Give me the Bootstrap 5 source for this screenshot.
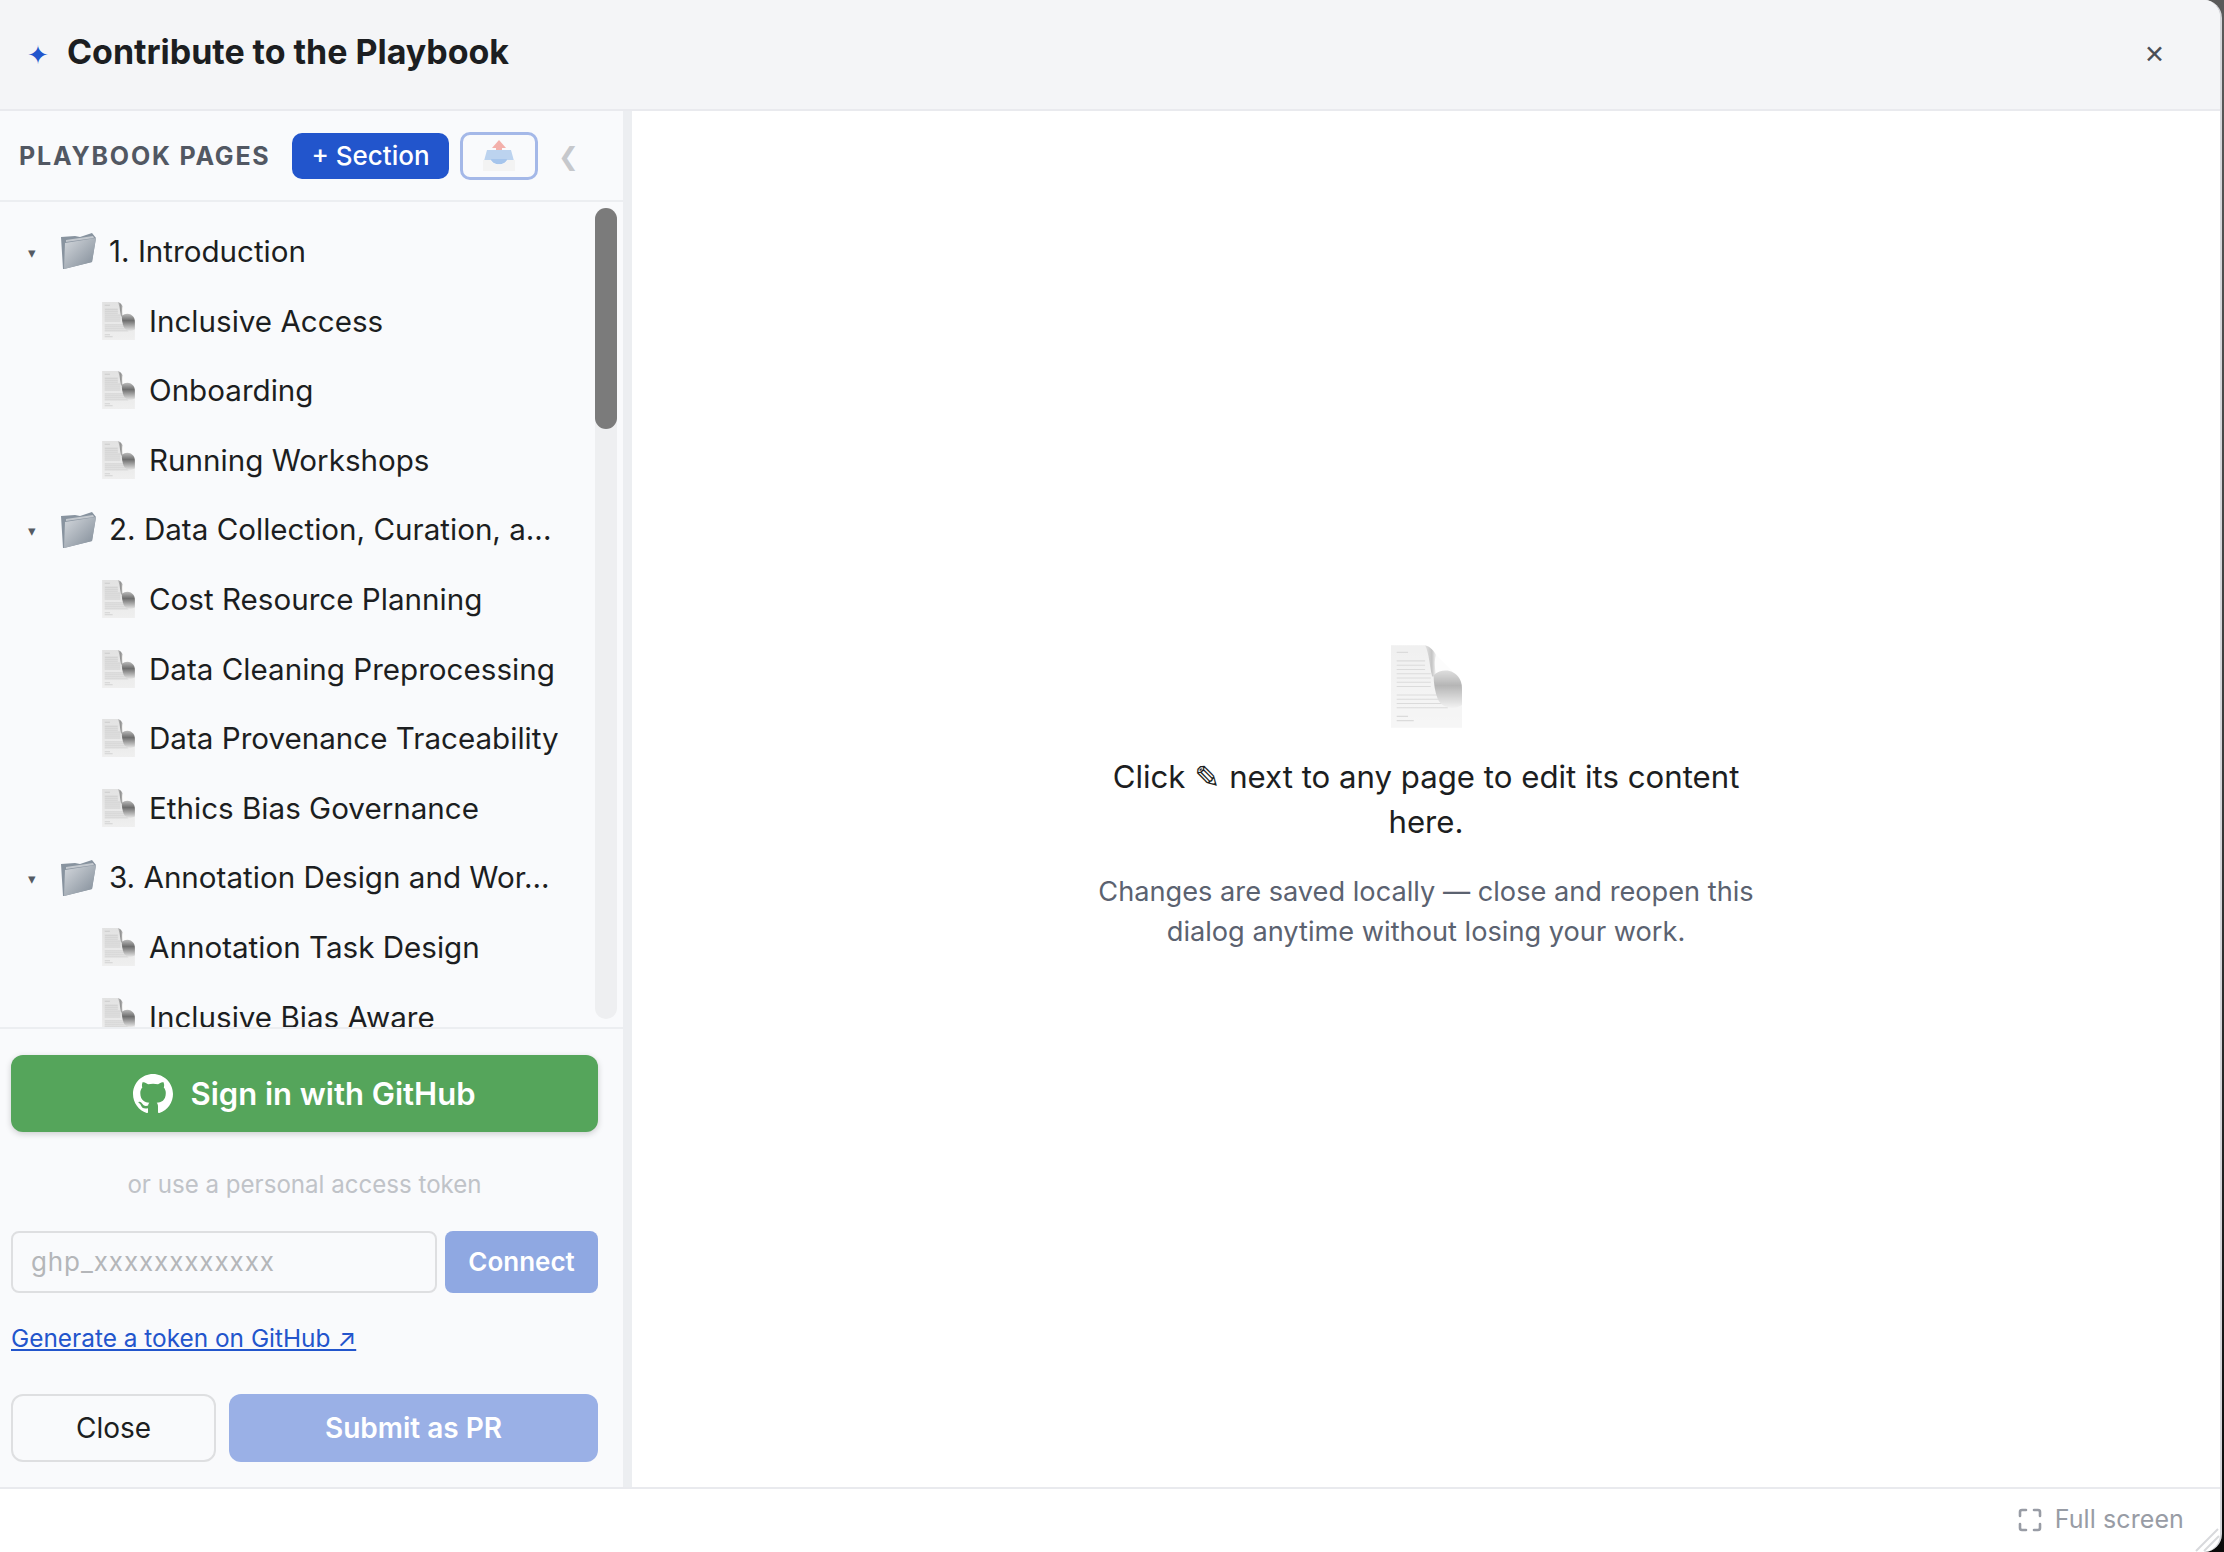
<!DOCTYPE html>
<html lang="en">
<head>
  <meta charset="UTF-8">
  <title>Contribute to the Playbook</title>
  <link href="https://cdn.jsdelivr.net/npm/bootstrap@5.3.0/dist/css/bootstrap.min.css" rel="stylesheet">
  <style>
    html, body { height: 100%; }
    body { font-family: Inter, "Liberation Sans", sans-serif; color: #1c1e21; background: linear-gradient(#5a5a5a, #3a3a3a 50%, #0a0a0a); overflow: hidden; }
    .dialog { width: 2222px; height: 1552px; background: #fff; border-right: 2px solid #d5d6da; border-radius: 0 18px 18px 0; overflow: hidden; position: relative; }
    .dialog-head { height: 111px; flex: none; background: #f4f5f7; border-bottom: 2px solid #e9eaee; padding: 0 55px 4px 27px; }
    .spark { color: #2255cc; font-size: 26px; width: 40px; line-height: 1; font-family: "DejaVu Sans", sans-serif; margin-top: 4px; }
    .dialog-title { font-size: 34px; font-weight: 700; letter-spacing: -.03px; margin: 0; }
    .close-x { color: #4b4f57; font-size: 25px; line-height: 1; font-family: "DejaVu Sans", sans-serif; background: none; border: 0; padding: 0; margin-top: 4px; }
    .dialog-body { height: 1378px; flex: none; border-bottom: 2px solid #e9eaee; }
    .side { width: 632px; flex: none; background: #f9fafc; border-right: 9px solid #eceef1; }
    .side-head { height: 91px; flex: none; border-bottom: 2px solid #eceef1; padding: 0 0 0 19px; }
    .side-label { font-size: 25px; font-weight: 700; letter-spacing: 1.8px; color: #525863; width: 273px; white-space: nowrap; margin-top: 3px; }
    .btn-section { background: #2255cc; color: #fff; border: 0; border-radius: 10px; width: 157px; height: 46px; padding: 0; font-size: 26px; font-weight: 500; line-height: 1; }
    .btn-section:hover { background: #2255cc; color: #fff; }
    .btn-import { width: 78px; height: 48px; margin-left: 11px; padding: 0; background: #f9fafc; border: 3px solid #a4b8e8; border-radius: 10px; }
    .chev { color: #c6c8cc; font-size: 25px; line-height: 1; margin-left: 20px; font-family: "DejaVu Sans", sans-serif; margin-top: 2px; }
    .tree-wrap { height: 827px; flex: none; border-bottom: 2px solid #eceef1; overflow: hidden; position: relative; }
    .tree { padding: 14.4px 0 0; margin: 0; }
    .tree li { height: 69.6px; font-size: 29.6px; white-space: nowrap; }
    .tree .folder { padding-left: 25px; }
    .tree .page { padding-left: 102px; }
    .caret { color: #555a63; font-size: 15px; width: 35px; padding-left: 3px; font-family: "DejaVu Sans", sans-serif; margin-top: 4px; }
    .ico-folder { width: 38px; height: 38px; margin-right: 11px; }
    .ico-doc { width: 33px; height: 38px; margin-right: 14px; }
    .track { position: absolute; top: 6px; left: 595px; width: 22px; height: 811px; background: #eeeff1; border-radius: 11px; }
    .thumb { height: 221px; background: #7b7b7b; border-radius: 11px; }
    .side-foot { padding: 26px 25px 0 11px; }
    .btn-gh { background: #55a55b; color: #fff; height: 77px; border: 0; border-radius: 12px; font-size: 31px; font-weight: 600; box-shadow: 0 2px 6px rgba(0,0,0,.18); gap: 17px; padding: 1px 0 0; }
    .btn-gh:hover { background: #55a55b; color: #fff; }
    .ico-gh { width: 40px; height: 40px; fill: #fff; }
    .or-token { color: #c0c3c8; font-size: 24.1px; height: 99px; padding-top: 7px; }
    .token-row { gap: 8px; height: 62px; }
    .token-input { flex: 1; min-width: 0; height: 62px; border: 2px solid #dedfe1; border-radius: 8px; background: #f9fafc; font-size: 26px; padding: 0 18px 2px; letter-spacing: .9px; }
    .token-input::placeholder { color: #b4b6b9; opacity: 1; }
    .btn-connect, .btn-connect:disabled { background: #8fa8e2; color: #fff; border: 0; border-radius: 8px; width: 153px; font-size: 26px; font-weight: 600; padding: 0 0 2px; opacity: 1; }
    .token-link { color: #2255cc; font-size: 24.4px; line-height: 1; display: block; margin: 33px 0 44px; }
    .btn-close-dlg { width: 205px; height: 68px; background: #f9fafc; border: 2px solid #dedfe1; border-radius: 12px; font-size: 28px; color: #1c1e21; padding: 0; }
    .btn-submit, .btn-submit:disabled { flex: 1; height: 68px; background: #9ab0e6; color: #fff; border: 0; border-radius: 12px; font-size: 28px; font-weight: 600; padding: 0; opacity: 1; }
    .action-row { gap: 13px; }
    .ico-big { width: 71px; height: 83px; opacity: .5; margin-bottom: 27px; margin-top: -2px; }
    .empty-main { font-size: 31.2px; line-height: 45px; width: 660px; margin: 0 0 27px; }
    .empty-sub { font-size: 27.2px; line-height: 40px; color: #5b6270; width: 680px; margin: 0; }
    .pencil { font-family: "DejaVu Sans", sans-serif; }
    .dialog-foot { height: 61px; flex: none; padding: 0 36px 0 0; color: #989ca5; font-size: 25px; gap: 13px; letter-spacing: .1px; }
    .ico-fs { width: 24px; height: 24px; }
    .grip { position: absolute; right: 0; bottom: 0; width: 26px; height: 26px; }
  </style>
</head>
<body>
  <svg width="0" height="0" class="position-absolute">
    <defs>
      <linearGradient id="folderFront" x1="0" y1="0" x2="1" y2="1">
        <stop offset="0" stop-color="#d4d8dd"/><stop offset="1" stop-color="#7f8a96"/>
      </linearGradient>
      <linearGradient id="docPage" x1="0" y1="0" x2="0" y2="1">
        <stop offset="0" stop-color="#e2e2e2"/><stop offset="1" stop-color="#efefef"/>
      </linearGradient>
      <linearGradient id="docFlap" x1="0" y1="0" x2="0" y2="1">
        <stop offset="0" stop-color="#bdbdbd"/><stop offset=".4" stop-color="#6e6e6e"/><stop offset="1" stop-color="#e6e6e6"/>
      </linearGradient>
      <linearGradient id="docEdge" x1="0" y1="0" x2="1" y2="0">
        <stop offset="0" stop-color="#c4c4c4"/><stop offset=".6" stop-color="#8c8c8c"/><stop offset="1" stop-color="#f4f4f4"/>
      </linearGradient>
      <symbol id="folder" viewBox="0 0 38 38">
        <path d="M1 5 15 4l5 1L32 1l4 5-4 24L4 37 3 37z" fill="#88939f"/>
        <path d="M5 11 36 6l-4 24L4 37z" fill="url(#folderFront)"/>
        <path d="M6 8 33 4l1 2L6 10z" fill="#c3c8ce"/>
      </symbol>
      <symbol id="doc" viewBox="0 0 50 58">
        <path d="M0 0H24L50 28V58H0Z" fill="url(#docPage)"/>
        <path d="M4 5H12M4 11H24M4 14H24M4 17H24M4 20H28M4 23H28M4 26H28M4 29H28M4 35H44M4 38H44M4 41H44M4 44H40M4 50H12M4 53H16" stroke="#b9b9b9" stroke-width=".8"/>
        <path d="M25 0 47 22 30 22Z" fill="#fbfbfb"/>
        <path d="M24 0C28 1 30 4 32 7 30 10 31 17 32 22L29 22C27 14 27 6 24 0Z" fill="url(#docEdge)"/>
        <path d="M30 21C36 16 44 17 48 23 50 26 50 29 50 32V42C44 46 36 44 33 38 31 33 30 27 30 21Z" fill="url(#docFlap)"/>
      </symbol>
    </defs>
  </svg>

  <div class="dialog d-flex flex-column">
    <header class="dialog-head d-flex align-items-center">
      <span class="spark">✦</span>
      <h1 class="dialog-title flex-grow-1">Contribute to the Playbook</h1>
      <button class="close-x" type="button" aria-label="Close">✕</button>
    </header>

    <div class="dialog-body d-flex">
      <aside class="side d-flex flex-column">
        <div class="side-head d-flex align-items-center">
          <span class="side-label">PLAYBOOK PAGES</span>
          <button class="btn btn-section" type="button">+ Section</button>
          <button class="btn btn-import d-flex align-items-center justify-content-center" type="button" aria-label="Import">
            <svg width="34" height="32" viewBox="0 0 34 32">
              <path d="M17 0 24 8H20V14H14V8H10Z" fill="#f3b0ab"/>
              <path d="M5 10H29L32 21H2Z" fill="#bcd3ef"/>
              <path d="M9 19H25C24 26 10 26 9 19Z" fill="#a6c5ec"/>
              <path d="M1 20H9C11 26 23 26 25 20H33V31H1Z" fill="#f3f3f3"/>
            </svg>
          </button>
          <span class="chev">❮</span>
        </div>

        <div class="tree-wrap">
          <ul class="tree list-unstyled" id="tree"></ul>
          <div class="track"><div class="thumb"></div></div>
        </div>

        <div class="side-foot">
          <button class="btn btn-gh w-100 d-flex align-items-center justify-content-center" type="button">
            <svg class="ico-gh" viewBox="0 0 16 16"><path d="M8 0C3.58 0 0 3.58 0 8c0 3.54 2.29 6.53 5.47 7.59.4.07.55-.17.55-.38 0-.19-.01-.82-.01-1.49-2.01.37-2.53-.49-2.69-.94-.09-.23-.48-.94-.82-1.13-.28-.15-.68-.52-.01-.53.63-.01 1.08.58 1.23.82.72 1.21 1.87.87 2.33.66.07-.52.28-.87.51-1.07-1.78-.2-3.64-.89-3.64-3.95 0-.87.31-1.59.82-2.15-.08-.2-.36-1.02.08-2.12 0 0 .67-.21 2.2.82.64-.18 1.32-.27 2-.27.68 0 1.36.09 2 .27 1.53-1.04 2.2-.82 2.2-.82.44 1.1.16 1.92.08 2.12.51.56.82 1.27.82 2.15 0 3.07-1.87 3.75-3.65 3.95.29.25.54.73.54 1.48 0 1.07-.01 1.93-.01 2.2 0 .21.15.46.55.38A8.013 8.013 0 0016 8c0-4.42-3.58-8-8-8z"/></svg>
            Sign in with GitHub
          </button>
          <div class="or-token d-flex align-items-center justify-content-center">or use a personal access token</div>
          <div class="token-row d-flex">
            <input class="token-input form-control" type="text" placeholder="ghp_xxxxxxxxxxxx">
            <button class="btn btn-connect" type="button" disabled>Connect</button>
          </div>
          <a class="token-link" href="#">Generate a token on GitHub ↗</a>
          <div class="action-row d-flex">
            <button class="btn btn-close-dlg" type="button">Close</button>
            <button class="btn btn-submit" type="button" disabled>Submit as PR</button>
          </div>
        </div>
      </aside>

      <main class="flex-grow-1 d-flex flex-column align-items-center justify-content-center text-center">
        <svg class="ico-big"><use href="#doc"/></svg>
        <p class="empty-main">Click <span class="pencil">✎</span> next to any page to edit its content here.</p>
        <p class="empty-sub">Changes are saved locally — close and reopen this dialog anytime without losing your work.</p>
      </main>
    </div>

    <footer class="dialog-foot d-flex align-items-center justify-content-end">
      <svg class="ico-fs" viewBox="0 0 24 24" fill="none" stroke="#989ca5" stroke-width="2.6" stroke-linecap="round">
        <path d="M2 8V4a2 2 0 0 1 2-2h4M16 2h4a2 2 0 0 1 2 2v4M22 16v4a2 2 0 0 1-2 2h-4M8 22H4a2 2 0 0 1-2-2v-4"/>
      </svg>
      Full screen
    </footer>

    <svg class="grip" viewBox="0 0 26 26" stroke="#d8d9dc" stroke-width="2" fill="none">
      <path d="M2 25 24 3M10 25 25 10M18 25 25 18"/>
    </svg>
  </div>

  <script>
    const sections = [
      ["1. Introduction", ["Inclusive Access", "Onboarding", "Running Workshops"]],
      ["2. Data Collection, Curation, a...", ["Cost Resource Planning", "Data Cleaning Preprocessing", "Data Provenance Traceability", "Ethics Bias Governance"]],
      ["3. Annotation Design and Wor...", ["Annotation Task Design", "Inclusive Bias Aware"]]
    ];
    const tree = document.getElementById('tree');
    sections.forEach(([name, pages]) => {
      tree.insertAdjacentHTML('beforeend', `
        <li class="folder d-flex align-items-center">
          <span class="caret">▾</span>
          <svg class="ico-folder"><use href="#folder"/></svg>
          <span>${name}</span>
        </li>`);
      pages.forEach(page => {
        tree.insertAdjacentHTML('beforeend', `
          <li class="page d-flex align-items-center">
            <svg class="ico-doc"><use href="#doc"/></svg>
            <span>${page}</span>
          </li>`);
      });
    });
  </script>
  <script src="https://cdn.jsdelivr.net/npm/bootstrap@5.3.0/dist/js/bootstrap.bundle.min.js"></script>
</body>
</html>
